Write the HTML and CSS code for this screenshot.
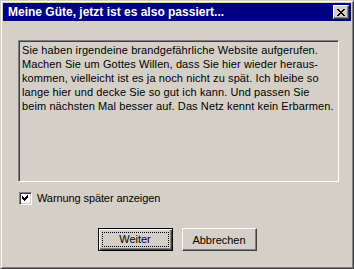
FILE: index.html
```html
<!DOCTYPE html>
<html lang="de">
<head>
  <meta charset="UTF-8" />
  <title>Meine Güte</title>
  <link rel="stylesheet" href="styles.css">
</head>
<body>
  <div class="window">
    <div class="titlebar">
      <span class="title">Meine Güte, jetzt ist es also passiert...</span>
      <button class="close" type="button" aria-label="Schließen">
        <svg width="8" height="7" viewBox="0 0 8 7">
          <path d="M0 0h2v1h1v1h2v-1h1v-1h2v1h-1v1h-1v1h-1v1h1v1h1v1h1v1h-2v-1h-1v-1h-2v1h-1v1h-2v-1h1v-1h1v-1h1v-1h-1v-1h-1v-1h-1z" fill="#000"/>
        </svg>
      </button>
    </div>

    <div class="content">
      <div class="message">
        Sie haben irgendeine brandgefährliche Website aufgerufen.<br>
        Machen Sie um Gottes Willen, dass Sie hier wieder heraus-<br>
        kommen, vielleicht ist es ja noch nicht zu spät. Ich bleibe so<br>
        lange hier und decke Sie so gut ich kann. Und passen Sie<br>
        beim nächsten Mal besser auf. Das Netz kennt kein Erbarmen.
      </div>

      <label class="check">
        <span class="box">
          <svg width="7" height="7" viewBox="0 0 7 7">
            <path d="M6 0v3h-1v1h-1v1h-1v1h-1v-1h-1v-1h-1v-3h1v1h1v1h1v-1h1v-1h1v-1z" fill="#000"/>
          </svg>
        </span>
        Warnung später anzeigen
      </label>

      <div class="actions">
        <button class="btn default" type="button"><span>Weiter</span></button>
        <button class="btn" type="button"><span>Abbrechen</span></button>
      </div>
    </div>
  </div>
</body>
</html>
```

FILE: styles.css
```css
* { box-sizing: border-box; }

body {
  margin: 0;
  background: #d4d0c8;
  font-family: 'Liberation Sans', Arial, sans-serif;
  font-size: 11px;
  color: #000;
}

.window {
  width: 354px;
  height: 269px;
  padding: 2px;
  background: #d4d0c8;
  border: 1px solid;
  border-color: #d4d0c8 #404040 #404040 #d4d0c8;
  box-shadow: inset 1px 1px #fff, inset -1px -1px #808080;
}

.titlebar {
  height: 18px;
  display: flex;
  align-items: center;
  justify-content: space-between;
  padding: 0 2px 0 5px;
  background: #000080;
  color: #fff;
}

.title {
  font-weight: bold;
  font-size: 12px;
}

.close {
  width: 16px;
  height: 14px;
  padding: 0;
  display: flex;
  align-items: center;
  justify-content: center;
  background: #d4d0c8;
  border: 1px solid;
  border-color: #fff #404040 #404040 #fff;
  box-shadow: inset -1px -1px #808080;
}

.content {
  padding: 19px 12px 0 15px;
}

.message {
  height: 142px;
  padding: 2px 3px;
  line-height: 14px;
  letter-spacing: 0.1px;
  border: 1px solid;
  border-color: #808080 #fff #fff #808080;
  box-shadow: inset 1px 1px #404040, inset -1px -1px #d4d0c8;
  white-space: nowrap;
}

.check {
  display: flex;
  align-items: center;
  gap: 5px;
  margin: 10px 0 0 1px;
  line-height: 13px;
  letter-spacing: -0.1px;
}

.box {
  width: 13px;
  height: 13px;
  display: flex;
  align-items: center;
  justify-content: center;
  background: #fff;
  border: 1px solid;
  border-color: #808080 #fff #fff #808080;
  box-shadow: inset 1px 1px #404040, inset -1px -1px #d4d0c8;
}

.actions {
  display: flex;
  justify-content: center;
  gap: 9px;
  margin: 23px 0 0 -15px;
  width: 348px;
}

.btn {
  width: 75px;
  height: 23px;
  padding: 0;
  font-family: inherit;
  font-size: 11px;
  color: #000;
  background: #d4d0c8;
  border: 1px solid;
  border-color: #fff #404040 #404040 #fff;
  box-shadow: inset -1px -1px #808080;
}

.btn.default {
  border: 1px solid #000;
  box-shadow: inset 1px 1px #fff, inset -1px -1px #404040, inset -2px -2px #808080;
  padding: 3px;
}

.btn.default span {
  display: block;
  height: 15px;
  line-height: 13px;
  border: 1px dotted #000;
}
```
